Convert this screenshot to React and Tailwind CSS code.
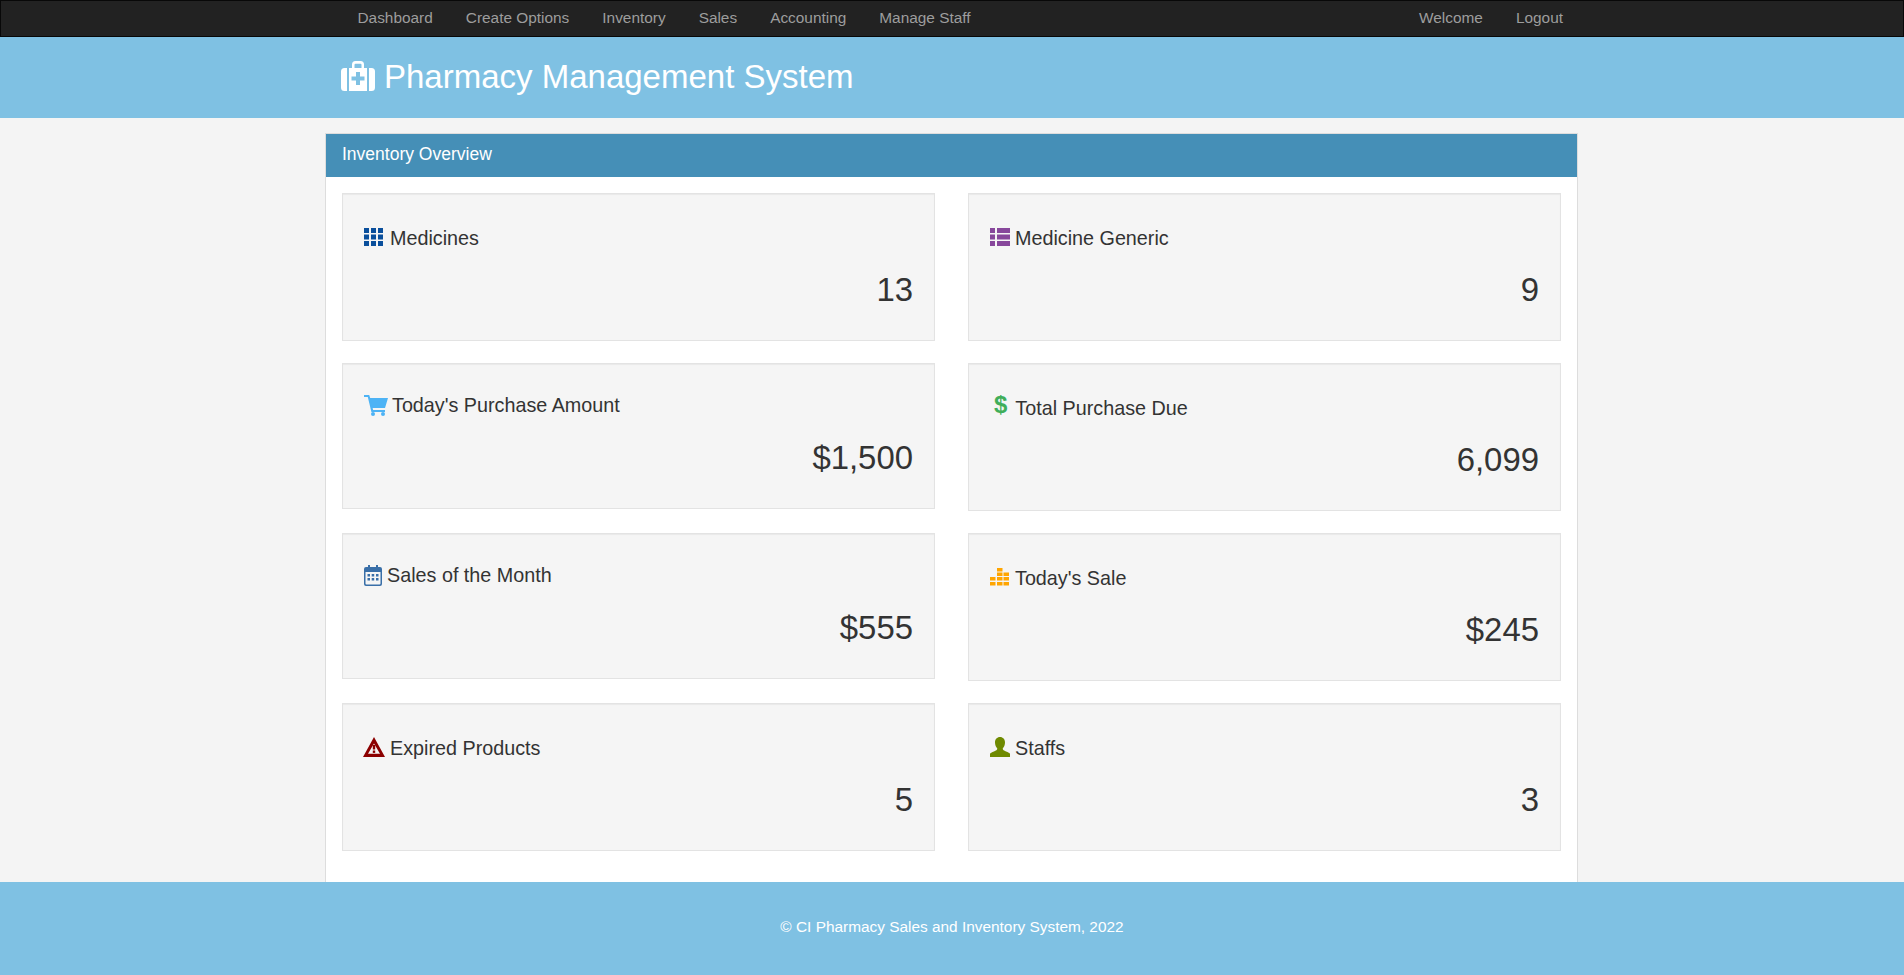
import React from "react";

function BagIcon() {
  return (
    <svg width="34" height="30" viewBox="0 0 34 30" fill="#fff" className="shrink-0 -mt-[3px]">
      <path d="M3.5 7H6v23H3.5A3.5 3.5 0 0 1 0 26.500V10.500A3.500 3.500 0 0 1 3.500 7z" />
      <path d="M30.500 7H28v23h2.500a3.500 3.500 0 0 0 3.500-3.500V10.500A3.500 3.500 0 0 0 30.500 7z" />
      <path
        fillRule="evenodd"
        d="M8 7h3V3.500A3.500 3.500 0 0 1 14.500 0h5A3.500 3.500 0 0 1 23 3.500V7h3v23H8zM13.500 7h7V3.800a1 1 0 0 0-1-1h-5a1 1 0 0 0-1 1zM15 11v4.500h-4.500v4H15V24h4v-4.500h4.500v-4H19V11z"
      />
    </svg>
  );
}

function GridIcon() {
  return (
    <svg width="19" height="18" viewBox="0 0 19 18" fill="#0a4f9c" className="shrink-0 mr-[7px] -mt-[4px]">
      <rect x="0" y="0" width="5" height="5" />
      <rect x="7" y="0" width="5" height="5" />
      <rect x="14" y="0" width="5" height="5" />
      <rect x="0" y="6.500" width="5" height="5" />
      <rect x="7" y="6.500" width="5" height="5" />
      <rect x="14" y="6.500" width="5" height="5" />
      <rect x="0" y="13" width="5" height="5" />
      <rect x="7" y="13" width="5" height="5" />
      <rect x="14" y="13" width="5" height="5" />
    </svg>
  );
}

function ListIcon() {
  return (
    <svg width="20" height="18" viewBox="0 0 20 18" fill="#87479b" className="shrink-0 mr-[5px] -mt-[4px]">
      <rect x="0" y="0" width="5" height="5" />
      <rect x="7" y="0" width="13" height="5" />
      <rect x="0" y="6.500" width="5" height="5" />
      <rect x="7" y="6.500" width="13" height="5" />
      <rect x="0" y="13" width="5" height="5" />
      <rect x="7" y="13" width="13" height="5" />
    </svg>
  );
}

function CartIcon() {
  return (
    <svg width="24" height="21" viewBox="0 0 24 21" fill="#4db3f5" className="shrink-0 mr-[4px] -mt-[2px]">
      <path d="M0 0h5.200l1 3H24l-3 10H8.600l.5 2H21v2H7.400L3.800 2H0z" />
      <circle cx="9" cy="19" r="2" />
      <circle cx="19" cy="19" r="2" />
    </svg>
  );
}

function CalendarIcon() {
  return (
    <svg width="18" height="21" viewBox="0 0 18 21" className="shrink-0 mr-[5px] -mt-[2px]">
      <path
        fill="#396fa8"
        fillRule="evenodd"
        d="M4 0h2v2h6V0h2v2h2a2 2 0 0 1 2 2v15a2 2 0 0 1-2 2H2a2 2 0 0 1-2-2V4a2 2 0 0 1 2-2h2zM1.500 7v11.500a1 1 0 0 0 1 1h13a1 1 0 0 0 1-1V7z"
      />
      <g fill="#396fa8">
        <rect x="3.500" y="9" width="2.500" height="2.500" />
        <rect x="7.700" y="9" width="2.500" height="2.500" />
        <rect x="12" y="9" width="2.500" height="2.500" />
        <rect x="3.500" y="13" width="2.500" height="2.500" />
        <rect x="7.700" y="13" width="2.500" height="2.500" />
        <rect x="12" y="13" width="2.500" height="2.500" />
      </g>
    </svg>
  );
}

function BarsIcon() {
  const bars = [
    [7, 0],
    [7, 4.500], [13.500, 4.500],
    [0, 9], [7, 9], [13.500, 9],
    [0, 14], [7, 14], [13.500, 14],
  ];
  return (
    <svg width="19" height="18" viewBox="0 0 19 18" fill="#ffa500" className="shrink-0 mr-[6px] -mt-[4px]">
      {bars.map(([x, y]) => (
        <rect key={`${x}-${y}`} x={x} y={y} width="5.500" height="3.500" />
      ))}
    </svg>
  );
}

function WarningIcon() {
  return (
    <svg width="22" height="20" viewBox="0 0 22 20" className="shrink-0 mr-[5px] -ml-[1px] -mt-[4px]">
      <path fill="#8b0000" fillRule="evenodd" d="M11 0 22 20H0zM11 6.500 5 16.800h12z" />
      <rect x="9.800" y="8" width="2.400" height="4.500" fill="#8b0000" />
      <rect x="9.800" y="13.500" width="2.400" height="2.400" fill="#8b0000" />
    </svg>
  );
}

function UserIcon() {
  return (
    <svg width="20" height="20" viewBox="0 0 20 20" fill="#6f8a00" className="shrink-0 mr-[5px] -mt-[4px]">
      <path d="M10 0c3 0 5 2.300 5 5.500 0 2.500-1 4.500-2.300 6 0 1.500 1.300 2 3.300 3 2 .9 4 1.300 4 2.500v3H0v-3c0-1.200 2-1.600 4-2.500 2-1 3.300-1.500 3.300-3C6 10 5 8 5 5.500 5 2.300 7 0 10 0z" />
    </svg>
  );
}

function DollarIcon() {
  return (
    <span className="shrink-0 mr-[8px] ml-[4px] text-[24px] font-bold leading-[20px] text-[#3fae5a] -mt-[8px]">$</span>
  );
}

const cards = [
  { icon: <GridIcon />, label: "Medicines", value: "13" },
  { icon: <ListIcon />, label: "Medicine Generic", value: "9" },
  { icon: <CartIcon />, label: "Today's Purchase Amount", value: "$1,500", tight: true },
  { icon: <DollarIcon />, label: "Total Purchase Due", value: "6,099" },
  { icon: <CalendarIcon />, label: "Sales of the Month", value: "$555", tight: true },
  { icon: <BarsIcon />, label: "Today's Sale", value: "$245" },
  { icon: <WarningIcon />, label: "Expired Products", value: "5" },
  { icon: <UserIcon />, label: "Staffs", value: "3" },
];

function StatCard({ icon, label, value, tight }) {
  return (
    <div
      className={
        tight
          ? "h-[146px] bg-[#f5f5f5] border border-[#e3e3e3] shadow-[inset_0_1px_1px_rgba(0,0,0,0.05)] px-[21px] pt-[28px]"
          : "h-[148px] bg-[#f5f5f5] border border-[#e3e3e3] shadow-[inset_0_1px_1px_rgba(0,0,0,0.05)] px-[21px] pt-[31px]"
      }
    >
      <div className="flex items-center h-[28px] text-[19.750px] text-[#333]">
        {icon}
        <span>{label}</span>
      </div>
      <div
        className={
          tight
            ? "mt-[20px] text-right text-[32.900px] leading-[35px] text-[#333]"
            : "mt-[19px] text-right text-[32.900px] leading-[35px] text-[#333]"
        }
      >
        {value}
      </div>
    </div>
  );
}

export default function App() {
  const leftLinks = ["Dashboard", "Create Options", "Inventory", "Sales", "Accounting", "Manage Staff"];
  const rightLinks = ["Welcome", "Logout"];

  return (
    <div className="min-h-screen flex flex-col bg-[#f4f4f4] font-['Liberation_Sans',Arial,sans-serif]">
      {/* Navbar */}
      <nav className="h-[37px] bg-[#222] border border-[#080808]">
        <div className="w-[1254px] mx-auto px-[16px] pb-[1px] h-full flex items-center justify-between text-[15.400px] text-[#9d9d9d]">
          <div className="flex">
            {leftLinks.map((link) => (
              <a key={link} href="#" className="px-[16.500px]">
                {link}
              </a>
            ))}
          </div>
          <div className="flex">
            {rightLinks.map((link) => (
              <a key={link} href="#" className="px-[16.500px] last:pr-0">
                {link}
              </a>
            ))}
          </div>
        </div>
      </nav>

      {/* Header */}
      <header className="h-[81px] bg-[#7fc1e3]">
        <div className="w-[1254px] mx-auto px-[16px] h-full flex items-center text-white">
          <BagIcon />
          <h1 className="ml-[9px] -mt-[2px] text-[33px] leading-none">Pharmacy Management System</h1>
        </div>
      </header>

      {/* Panel */}
      <main className="flex-1 flex flex-col w-[1253px] ml-[325px] mt-[15px] bg-white border-x border-t border-[#ddd]">
        <div className="h-[43px] bg-[#458fb7] px-[16px] pb-[2px] flex items-center text-white text-[17.500px]">
          Inventory Overview
        </div>
        <div className="px-[16px] pt-[16px] pb-[30px] grid grid-cols-2 gap-x-[33px] gap-y-[22px] auto-rows-[148px] items-start">
          {cards.map((card) => (
            <StatCard key={card.label} {...card} />
          ))}
        </div>
      </main>

      {/* Footer */}
      <footer className="h-[93px] pb-[3px] bg-[#7fc1e3] flex items-center justify-center text-white text-[15.400px]">
        © CI Pharmacy Sales and Inventory System, 2022
      </footer>
    </div>
  );
}
